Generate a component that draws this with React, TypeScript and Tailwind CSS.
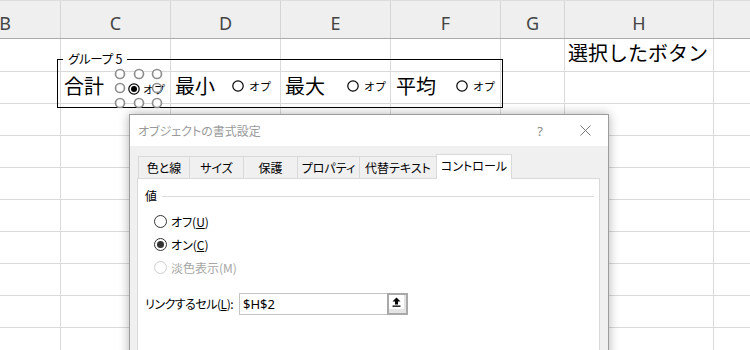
import React from "react";

const cols: { w: string; label: string }[] = [
  { w: "w-[111px] -ml-[50px]", label: "B" },
  { w: "w-[110px]", label: "C" },
  { w: "w-[110px]", label: "D" },
  { w: "w-[110px]", label: "E" },
  { w: "w-[110px]", label: "F" },
  { w: "w-[64px]", label: "G" },
  { w: "w-[149px]", label: "H" },
  { w: "w-[110px]", label: "" },
];

const rowHeights = ["h-[33px]", "h-[32px]", "h-[32px]", "h-[32px]", "h-[32px]", "h-[32px]", "h-[32px]", "h-[32px]", "h-[32px]", "h-[32px]"];

function SheetRadio({ checked = false }: { checked?: boolean }) {
  return (
    <svg width="12" height="12" viewBox="0 0 12 12" className="shrink-0">
      <circle cx="6" cy="6" r="5.2" fill="white" stroke="black" strokeWidth="1.2" />
      {checked && <circle cx="6" cy="6" r="3" fill="black" />}
    </svg>
  );
}

function DlgRadio({ checked = false, disabled = false }: { checked?: boolean; disabled?: boolean }) {
  return (
    <div
      className={
        "w-[13px] h-[13px] rounded-full border bg-white flex items-center justify-center shrink-0 " +
        (disabled ? "border-[#cfcfcf]" : "border-[#333333]")
      }
    >
      {checked && <div className="w-[7px] h-[7px] rounded-full bg-[#333333]" />}
    </div>
  );
}

export default function App() {
  return (
    <div className="relative w-[750px] h-[350px] overflow-hidden bg-white font-['Noto_Sans_CJK_JP',sans-serif]">
      {/* Column header */}
      <div className="flex h-[39px] bg-[#efefef] border-t border-t-[#dcdcdc] border-b border-b-[#acacac]">
        {cols.map((c, i) => (
          <div
            key={i}
            className={
              c.w +
              " shrink-0 h-full border-r border-r-[#d5d5d5] flex items-center justify-center pt-[6px] text-[18px] leading-[20px] text-[#444444] font-['Noto_Sans',sans-serif]"
            }
          >
            {c.label}
          </div>
        ))}
      </div>

      {/* Grid rows */}
      {rowHeights.map((h, r) => (
        <div key={r} className={"flex " + h}>
          {cols.map((c, i) => (
            <div key={i} className={c.w + " shrink-0 h-full border-r border-b border-[#dadada]"}>
              {r === 0 && i === 6 && (
                <div className="pl-[3px] pt-[4px] text-[20px] leading-[20px] text-black whitespace-nowrap">
                  選択したボタン
                </div>
              )}
            </div>
          ))}
        </div>
      ))}

      {/* Group box */}
      <div className="absolute left-[57px] top-[59px] w-[446px] h-[49px] border border-black">
        <div className="absolute left-[5px] -top-[9px] bg-white px-[5px] text-[12.5px] leading-[16px] tracking-[-0.3px] text-black whitespace-nowrap [font-feature-settings:'palt']">
          グループ 5
        </div>
        <div className="flex items-center h-[20px] mt-[16px] pl-[6px] text-black whitespace-nowrap">
          <span className="text-[20px] leading-[20px]">合計</span>
          <span className="ml-[24px] mt-[6px] flex items-center">
            <SheetRadio checked />
            <span className="ml-[3px] text-[11px] leading-[12px]">オプ</span>
          </span>
          <span className="ml-[10px] text-[20px] leading-[20px]">最小</span>
          <span className="ml-[17px]">
            <SheetRadio />
          </span>
          <span className="ml-[5px] text-[11px] leading-[12px]">オプ</span>
          <span className="ml-[14px] text-[20px] leading-[20px]">最大</span>
          <span className="ml-[22px]">
            <SheetRadio />
          </span>
          <span className="ml-[5px] text-[11px] leading-[12px]">オプ</span>
          <span className="ml-[10px] text-[20px] leading-[20px]">平均</span>
          <span className="ml-[20px]">
            <SheetRadio />
          </span>
          <span className="ml-[5px] text-[11px] leading-[12px]">オプ</span>
        </div>
        {/* selection handles */}
        <svg className="absolute left-[56px] top-[8px]" width="50" height="42" viewBox="0 0 50 42">
          {[
            [6, 6],
            [25, 6],
            [43, 6],
            [6, 20],
            [43, 20],
            [6, 35],
            [25, 35],
            [43, 35],
          ].map(([x, y], i) => (
            <circle key={i} cx={x} cy={y} r="4.5" fill={i === 4 ? "none" : "white"} stroke="#8f8f8f" strokeWidth="1.7" />
          ))}
        </svg>
      </div>

      {/* Dialog */}
      <div className="absolute left-[129px] top-[114px] w-[480px] h-[260px] border border-[#9c9c9c] bg-[#f0f0f0] shadow-[0_0_10px_rgba(0,0,0,0.3)] flex flex-col [font-feature-settings:'palt']">
        <div className="h-[31px] bg-white flex items-center pl-[8px] shrink-0">
          <span className="text-[12px] leading-[16px] text-[#9a9a9a] whitespace-nowrap">オブジェクトの書式設定</span>
          <span className="ml-auto text-[13px] leading-[16px] text-[#8a8a8a] font-['Noto_Sans',sans-serif]">?</span>
          <svg className="ml-[37px] mr-[17px]" width="11" height="11" viewBox="0 0 11 11">
            <path d="M0.5 0.5 L10.5 10.5 M10.5 0.5 L0.5 10.5" stroke="#7a7a7a" strokeWidth="1" />
          </svg>
        </div>

        {/* Tabs */}
        <div className="flex items-end pl-[8px] mt-[8px] shrink-0 text-[12px] leading-[16px] text-black whitespace-nowrap">
          <div className="w-[52px] h-[22px] border-l border-t border-r border-[#d9d9d9] flex items-center justify-center">色と線</div>
          <div className="w-[55px] h-[22px] -ml-px border-l border-t border-r border-[#d9d9d9] flex items-center justify-center">サイズ</div>
          <div className="w-[55px] h-[22px] -ml-px border-l border-t border-r border-[#d9d9d9] flex items-center justify-center">保護</div>
          <div className="w-[63px] h-[22px] -ml-px border-l border-t border-r border-[#d9d9d9] flex items-center justify-center">プロパティ</div>
          <div className="w-[78px] h-[22px] -ml-px border-l border-t border-r border-[#d9d9d9] flex items-center justify-center">代替テキスト</div>
          <div className="relative z-10 w-[76px] h-[25px] -ml-px -mb-px bg-white border-l border-t border-r border-[#d9d9d9] flex items-center justify-center pb-[2px]">
            コントロール
          </div>
        </div>

        {/* Panel */}
        <div className="ml-[7px] mr-[8px] flex-1 bg-white border border-[#d9d9d9] pl-[7px] pr-[5px] pt-[9px] text-[12px] leading-[16px] text-black">
          <div className="flex items-center h-[16px]">
            <span>値</span>
            <div className="flex-1 h-px bg-[#dcdcdc] ml-[5px]" />
          </div>
          <div className="mt-[6px] pl-[9px]">
            <div className="flex items-center h-[23px]">
              <DlgRadio />
              <span className="ml-[4px]">
                オフ(<span className="underline">U</span>)
              </span>
            </div>
            <div className="flex items-center h-[23px]">
              <DlgRadio checked />
              <span className="ml-[4px]">
                オン(<span className="underline">C</span>)
              </span>
            </div>
            <div className="flex items-center h-[23px]">
              <DlgRadio disabled />
              <span className="ml-[4px] text-[#a6a6a6]">淡色表示(M)</span>
            </div>
          </div>
          <div className="mt-[14px] flex items-center h-[22px]">
            <span className="w-[94px] shrink-0 whitespace-nowrap tracking-[-0.5px]">
              リンクするセル(<span className="underline">L</span>):
            </span>
            <div className="w-[169px] h-[22px] flex">
              <div className="flex-1 h-full border-y border-l border-[#c4c4c4] flex items-center pl-[3px] text-[13px] font-['Noto_Sans',sans-serif]">
                $H$2
              </div>
              <div className="w-[21px] h-full border-2 border-[#a9a9a9] bg-[#e4e4e4] flex items-start justify-start">
                <div className="w-[15px] h-[14px] bg-white flex items-center justify-center">
                  <svg width="9" height="10" viewBox="0 0 9 10">
                    <path d="M4.5 0.5 L8.5 4.5 L6 4.5 L6 7.5 L3 7.5 L3 4.5 L0.5 4.5 Z" fill="black" />
                    <rect x="0.5" y="8.5" width="8" height="1.3" fill="black" />
                  </svg>
                </div>
              </div>
            </div>
          </div>
        </div>
      </div>
    </div>
  );
}
